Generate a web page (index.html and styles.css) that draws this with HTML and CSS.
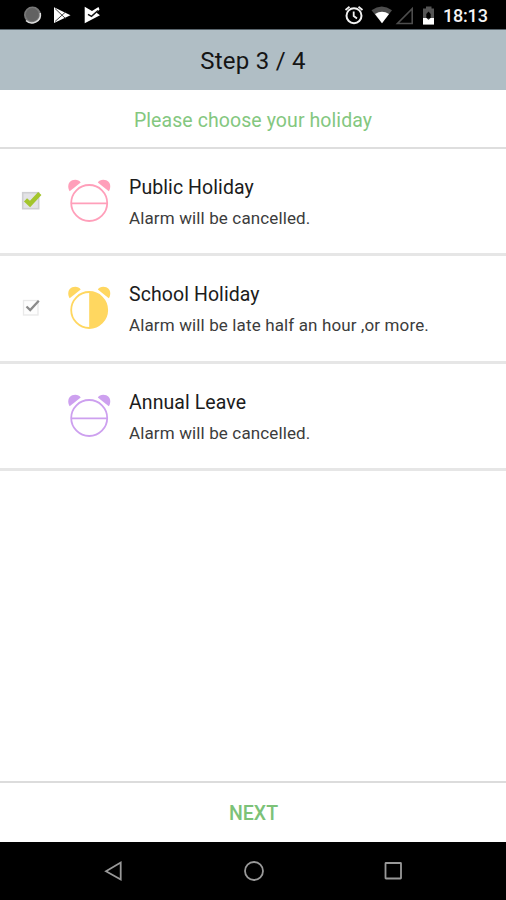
FILE: index.html
```html
<!DOCTYPE html>
<html lang="en">
<head>
<meta charset="utf-8">
<title>Step 3 / 4</title>
<link rel="stylesheet" href="styles.css">
</head>
<body>
<div class="screen">
  <div class="status">
    <svg class="status-left" width="90" height="30" viewBox="0 0 90 30">
      <circle cx="12.5" cy="15" r="8.5" fill="#777"/>
      <path d="M6 20.5A8.500 8.500 0 0 0 20.300 13" fill="none" stroke="#ddd" stroke-width="1.500"/>
      <circle cx="12.300" cy="14.600" r="6.500" fill="#626262"/>
      <path d="M34 7.200L50.500 15.300 34 23Z" fill="#fff"/>
      <path d="M35 8.500L45.500 18.500M35 21.500L45.500 12" stroke="#444" stroke-width="1"/>
      <path d="M64.700 6.700L72 11 78.500 7 79.500 9.500 76.500 12.700 80 15.300 64.700 23.200Z" fill="#fff"/>
      <path d="M68 14.300L71.500 16.300 78 10.500" fill="none" stroke="#111" stroke-width="1.500"/>
    </svg>
    <svg class="status-right" width="96" height="30" viewBox="342 0 96 30">
      <circle cx="354" cy="15.700" r="7.500" fill="none" stroke="#f2f2f2" stroke-width="2"/>
      <path d="M353.700 11.500V16L357 18.500M345.500 10L349.500 6.800M358.500 6.800L362.500 10" fill="none" stroke="#f2f2f2" stroke-width="1.800"/>
      <path d="M371.500 10.200Q381.700 2.800 392 10.200L382 23.200Z" fill="#4d4d4d"/>
      <path d="M375 14Q382 9.500 389 14L382 23.200Z" fill="#fff"/>
      <path d="M397.500 23.500H412.200V8.800Z" fill="none" stroke="#4d4d4d" stroke-width="1.600"/>
      <path d="M426 6.500H431.500V8.500H434V24.500H423V8.500H426Z" fill="#555"/>
      <path d="M426.300 18.500V14L428.500 11.500 430.700 14V18.500Z" fill="#000"/>
      <path d="M423 18H426.500L428.500 20 430.500 18H434V24.500H423Z" fill="#fff"/>
    </svg>
    <span class="clock">18:13</span>
  </div>
  <header class="header">Step 3 / 4</header>
  <p class="prompt">Please choose your holiday</p>
  <ul class="list">
    <li class="row">
      <svg class="check" width="24" height="24" viewBox="0 0 24 24">
        <rect x="4.700" y="4.700" width="16" height="16" fill="#e3e3e6" stroke="#cfcfd2" stroke-width="1.600"/>
        <path d="M7.500 11.800L12 16 21.800 5.500" fill="none" stroke="#a3c52c" stroke-width="4.500"/>
      </svg>
      <svg class="alarm pink" width="44" height="44" viewBox="0 0 44 44">
        <path class="bell" d="M2.700 12.300C-.3 7.500 1.300 .8 8.300 .8 10.700 .8 12.500 1.800 13.700 3.500Z"/>
        <path class="bell" d="M41.800 12.300C44.800 7.500 43.200 .8 36.200 .8 33.800 .8 32 1.800 30.800 3.500Z"/>
        <circle class="face" cx="22.200" cy="24" r="18"/>
        <path class="hand" d="M4.500 24.300H40"/>
      </svg>
      <div class="copy"><h2>Public Holiday</h2><p>Alarm will be cancelled.</p></div>
    </li>
    <li class="row">
      <svg class="check" width="24" height="24" viewBox="0 0 24 24">
        <rect x="5.500" y="5.500" width="14.500" height="14.500" fill="#fdfdfd" stroke="#e9e9e9" stroke-width="1.300"/>
        <path d="M8.500 11.500L12.200 15 20.800 5.700" fill="none" stroke="#8b8b8b" stroke-width="2.300"/>
      </svg>
      <svg class="alarm yellow" width="44" height="44" viewBox="0 0 44 44">
        <path class="bell" d="M2.700 12.300C-.3 7.500 1.300 .8 8.300 .8 10.700 .8 12.500 1.800 13.700 3.500Z"/>
        <path class="bell" d="M41.800 12.300C44.800 7.500 43.200 .8 36.200 .8 33.800 .8 32 1.800 30.800 3.500Z"/>
        <circle class="face" cx="22.200" cy="24" r="18"/>
        <path class="bell" d="M22.200 6A18 18 0 0 1 22.200 42Z"/>
      </svg>
      <div class="copy"><h2>School Holiday</h2><p>Alarm will be late half an hour ,or more.</p></div>
    </li>
    <li class="row">
      <span class="check"></span>
      <svg class="alarm purple" width="44" height="44" viewBox="0 0 44 44">
        <path class="bell" d="M2.700 12.300C-.3 7.500 1.300 .8 8.300 .8 10.700 .8 12.500 1.800 13.700 3.500Z"/>
        <path class="bell" d="M41.800 12.300C44.800 7.500 43.200 .8 36.200 .8 33.800 .8 32 1.800 30.800 3.500Z"/>
        <circle class="face" cx="22.200" cy="24" r="18"/>
        <path class="hand" d="M4.500 24.300H40"/>
      </svg>
      <div class="copy"><h2>Annual Leave</h2><p>Alarm will be cancelled.</p></div>
    </li>
  </ul>
  <div class="next">NEXT</div>
  <nav class="nav">
    <svg width="20" height="22" viewBox="0 0 20 22"><path d="M2 11.200L16.700 2.500V19.500Z"/></svg>
    <svg width="22" height="22" viewBox="0 0 22 22"><circle cx="11" cy="11" r="9"/></svg>
    <svg width="20" height="22" viewBox="0 0 20 22"><rect x="2.500" y="3" width="15.500" height="15.500" rx=".5"/></svg>
  </nav>
</div>
</body>
</html>
```
FILE: styles.css
```css
* { box-sizing: border-box; }
body { margin: 0; background: #fff; font-family: Roboto, "Liberation Sans", sans-serif; }
h2, p, ul { margin: 0; padding: 0; font-weight: 400; }
svg { display: block; }
.screen { width: 506px; height: 900px; display: flex; flex-direction: column; }
.status { height: 30px; flex: none; display: flex; align-items: center; background: #000; color: #f4f4f4; border-bottom: 1px solid #59656d; }
.status-left { margin-left: 20px; }
.status-right { margin-left: auto; }
.clock { width: 68px; padding: 3px 0 0 5px; font-size: 18px; font-weight: 500; line-height: 24px; letter-spacing: -.2px; }
.header { height: 60px; flex: none; background: #b0bec5; color: #151515; text-align: center; font-size: 24px; line-height: 62px; letter-spacing: .25px; }
.prompt { height: 59px; flex: none; border-bottom: 2px solid #dedede; text-align: center; color: #84c77f; font-size: 19.5px; line-height: 61px; letter-spacing: .08px; }
.list { flex: 1; list-style: none; }
.row { height: 107.3px; display: flex; align-items: flex-start; border-bottom: 3px solid #e6e6e6; }
.check { width: 24px; height: 24px; margin: 39px 0 0 18px; flex: none; }
.alarm { margin: 30px 0 0 25px; flex: none; }
.copy { margin: 24px 0 0 18px; white-space: nowrap; }
.copy h2 { font-size: 19.5px; line-height: 30px; color: #1c1c1c; letter-spacing: .08px; }
.copy p { font-size: 17px; line-height: 31px; color: #3c3c3c; letter-spacing: .13px; }
.face { fill: none; stroke: currentColor; stroke-width: 1.8; }
.bell { fill: currentColor; }
.hand { stroke: currentColor; stroke-width: 1.8; }
.pink { color: #ff9fba; }
.yellow { color: #ffd760; }
.purple { color: #cda0ef; }
.next { height: 61px; flex: none; border-top: 2px solid #dcdcdc; text-align: center; color: #7cc278; font-size: 19.5px; font-weight: 500; line-height: 61px; padding-left: 1px; }
.nav { height: 58px; flex: none; background: #000; display: flex; justify-content: space-between; align-items: center; padding: 0 103px 0 104px; }
.nav svg { fill: none; stroke: #999; stroke-width: 1.8; }
```
